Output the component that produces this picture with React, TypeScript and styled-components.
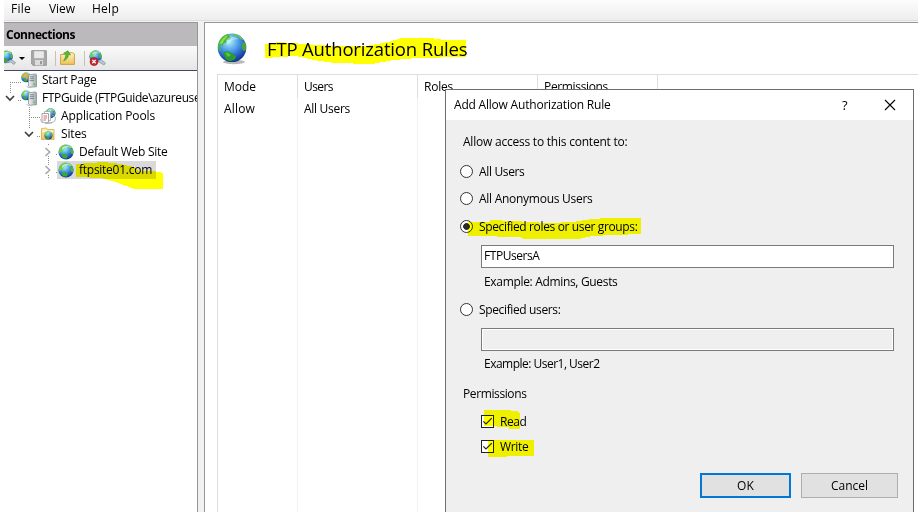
import React, { useLayoutEffect, useRef, useState } from "react";
import styled, { createGlobalStyle, css } from "styled-components";

const GlobalStyle = createGlobalStyle`
  *, *::before, *::after { box-sizing: border-box; }
  html, body { margin: 0; padding: 0; overflow: hidden; background: #fff; }
  body { font-family: "Open Sans", "Noto Sans", sans-serif; font-size: 12px; line-height: 18px; color: #000; }
  svg { display: block; flex: none; }
`;

/* ---------- text ---------- */

const TextSpan = styled.span<{ $bold?: boolean; $size?: number }>`
  position: relative;
  display: inline-block;
  flex: none;
  justify-self: start;
  white-space: pre;
  font-weight: ${(p) => (p.$bold ? 700 : 400)};
  font-size: ${(p) => p.$size ?? 12}px;
`;

interface TextProps {
  children: string;
  width: number;
  bold?: boolean;
  size?: number;
}

/* Tracks the text so that it spans the given width. */
function Text({ children, width, bold, size }: TextProps) {
  const ref = useRef<HTMLSpanElement>(null);
  const [spacing, setSpacing] = useState(0);
  useLayoutEffect(() => {
    if (!ref.current) return;
    const natural = ref.current.getBoundingClientRect().width - spacing * children.length;
    setSpacing((width - natural) / children.length);
  }, [children, width]);
  return (
    <TextSpan ref={ref} $bold={bold} $size={size} style={{ letterSpacing: `${spacing}px` }}>
      {children}
    </TextSpan>
  );
}

/* ---------- marker strokes ---------- */

const MarkerSvg = styled.svg<{ $x: number; $y: number }>`
  position: absolute;
  left: ${(p) => p.$x}px;
  top: ${(p) => p.$y}px;
  mix-blend-mode: multiply;
  pointer-events: none;
  z-index: 2;
`;

function Marker({ x, y, w, h, points }: { x: number; y: number; w: number; h: number; points: string }) {
  return (
    <MarkerSvg $x={x} $y={y} width={w} height={h} shapeRendering="crispEdges">
      <polygon points={points} fill="#ffff00" />
    </MarkerSvg>
  );
}

/* ---------- icons ---------- */

function GlobeShape() {
  return (
    <>
      <circle cx="8" cy="8" r="7.6" fill="url(#sea)" />
      <path d="M.9 6.500C1.800 3 4.500.8 7.500.5L9 2 7 3.200 7.300 4.800 5.200 6 4.600 8.200 2.800 8 1.500 9.800Z" fill="#6fd048" />
      <path d="M8.800 1.400 11 1.100 14 3.600 13 4.600 10.500 3.500Z" fill="#8be063" />
      <path d="M12.300 5.500 14.600 4.700 15.500 8 14.500 10.400 12.600 9Z" fill="#4fb83e" />
      <path d="M3.500 10.200 6.800 9.700 10 12 8.600 14.600 5 14.300Z" fill="#36ad30" />
      <path d="M4 3.800C5.500 1.800 9 1.500 11.200 3 9 3 6 4 4.500 6.500Z" fill="#e4fbff" opacity=".6" />
    </>
  );
}

const HiddenSvg = styled.svg`
  position: absolute;
`;

function IconDefs() {
  return (
    <HiddenSvg width="0" height="0" aria-hidden>
      <defs>
        <radialGradient id="sea" cx=".4" cy=".28" r=".75">
          <stop offset="0" stopColor="#b4f0fb" />
          <stop offset=".45" stopColor="#4a9ce8" />
          <stop offset=".8" stopColor="#1f52b4" />
          <stop offset="1" stopColor="#143582" />
        </radialGradient>
        <linearGradient id="folder" x1="0" y1="0" x2="0" y2="1">
          <stop offset="0" stopColor="#fff3b8" />
          <stop offset="1" stopColor="#efc35b" />
        </linearGradient>
        <linearGradient id="tower" x1="0" y1="0" x2="1" y2="0">
          <stop offset="0" stopColor="#f3f5f6" />
          <stop offset="1" stopColor="#9da7ad" />
        </linearGradient>
      </defs>
    </HiddenSvg>
  );
}

const GlobeIcon = ({ size = 16 }: { size?: number }) => (
  <svg width={size} height={size} viewBox="0 0 16 16">
    <GlobeShape />
  </svg>
);

const LargeGlobe = () => (
  <svg width="32" height="32" viewBox="0 0 32 32">
    <ellipse cx="17" cy="29" rx="11" ry="2.200" fill="#8a8a8a" opacity=".6" />
    <circle cx="15" cy="14.800" r="14.300" fill="url(#sea)" />
    <path d="M.9 13C1.500 7 5.500 2.500 10.500 1L13 1.800 12 3.500 14 4.300 12.500 6.800 10.300 7 9 9.800 6.500 10.500 6 13 3.500 11.600 2.500 14.500 4 17.500 2.200 18Z" fill="#4cb83a" />
    <path d="M2.500 11C4 6.500 7 3.500 10.500 2.200L10 4 7 7.500 5.500 10.500Z" fill="#a5e85c" opacity=".75" />
    <path d="M14.500 1.200 19.500 1.300 24.500 4.200 26.500 7 23.500 6.200 21.500 3.800 18 3.500Z" fill="#66c84d" />
    <path d="M25.500 9.500 28 9.200 29.300 13 28.700 17.500 26.500 18 24.300 14.500Z" fill="#46a53c" />
    <path d="M6 19 11 18.200 15.200 20.500 19.300 23.500 17.500 26.800 12.500 28.300 8.500 26 7.200 22.300Z" fill="#2b9c2c" />
    <path d="M8 20 11 19.500 14 22 11 24Z" fill="#7bd854" opacity=".6" />
    <path d="M9 7C12 3.500 18 3 22 6.500 18 5.800 13 8 10.500 12.500Z" fill="#e4fbff" opacity=".4" />
  </svg>
);

const ServerIcon = ({ home }: { home?: boolean }) => (
  <svg width="16" height="16" viewBox="0 0 16 16">
    <g transform="translate(0 .2) scale(.65)">
      <GlobeShape />
    </g>
    {home && <path d="M.3 4.700 4.800.5 9.200 4.400 8 5.300 4.800 2.500 1.700 5.500ZM4 3.500 7.500 5.500 5.500 8Z" fill="#f3a31d" />}
    <path d="M9 2.700 14.500 1.900 15.600 3V14.700L9 15.300 7.500 14V3.600Z" fill="url(#tower)" stroke="#7c868c" strokeWidth=".7" />
    <path d="M8.700 4.800H13M8.700 6.700H13M8.700 8.600H13" stroke="#66747d" strokeWidth=".8" />
    <rect x="12.300" y="11.300" width="1.800" height="1.800" fill="#51d434" />
    <path d="M5.500 14.500 8 15.500H11" fill="none" stroke="#b6bec3" />
  </svg>
);

const PoolsIcon = () => (
  <svg width="16" height="16" viewBox="0 0 16 16">
    <g transform="translate(5.200 0) scale(.66)">
      <GlobeShape />
    </g>
    <path d="M4.500 3.500H10.500V12.500H4.500Z" fill="#fff" stroke="#9b9b9b" strokeWidth=".7" />
    <path d="M2 5.500H8.500V14.500H2Z" fill="#fff" stroke="#8b8b95" strokeWidth=".8" />
    <path d="M3.500 8H7M3.500 10H7M3.500 12H6" stroke="#e0524b" strokeWidth=".9" />
    <path d="M.5 11C.5 16.500 15.500 16.500 15.500 10.500M12.500 7.500C15 8 15.700 9.500 15.500 11" fill="none" stroke="#b9c3cc" strokeWidth="1.200" />
    <path d="M5 15.400 12 14.800" stroke="#9ba8b2" strokeWidth=".8" />
  </svg>
);

const SitesIcon = () => (
  <svg width="16" height="16" viewBox="0 0 16 16">
    <path d="M1.500 2.500 6.500 2 7.500 3.500H14V13.500H1.500Z" fill="url(#folder)" stroke="#d5a942" strokeWidth=".8" />
    <path d="M2 5.200H13.500" stroke="#fffbe2" />
    <g transform="translate(4 5) scale(.55)">
      <GlobeShape />
    </g>
  </svg>
);

const ConnectIcon = () => (
  <svg width="13" height="16" viewBox="0 0 13 16">
    <g transform="translate(-4 .2) scale(.82)">
      <GlobeShape />
    </g>
    <path d="M1 13 7 9.500 11.500 12.500 10 14.500 6.500 12Z" fill="#b8c7cf" stroke="#758791" strokeWidth=".6" />
  </svg>
);

const SaveIcon = () => (
  <svg width="16" height="16" viewBox="0 0 16 16">
    <path d="M.7.7H15.300V15.300H2L.7 14Z" fill="#a9a9a9" stroke="#939393" />
    <rect x="3.200" y="1.200" width="9.600" height="7" fill="#e9e9e9" />
    <rect x="4" y="10" width="8" height="5.300" fill="#dcdcdc" />
    <rect x="9" y="11" width="2" height="3.300" fill="#999" />
  </svg>
);

const UpFolderIcon = () => (
  <svg width="15" height="16" viewBox="0 0 15 16">
    <path d="M.6 4.500H5L6.500 2.800H12.500L14.400 4V14.400H.6Z" fill="url(#folder)" stroke="#c89a3b" strokeWidth=".9" />
    <path d="M3.500 11C7 9.500 8.300 7.500 8.500 4.500L10.500 5 8 .8 3.500 3.300 5.800 3.900C5.800 6.500 5 8.800 3.500 11Z" fill="#55bb2f" stroke="#318b1d" strokeWidth=".5" />
  </svg>
);

const DisconnectIcon = () => (
  <svg width="18" height="17" viewBox="0 0 18 17">
    <g transform="scale(.82)">
      <GlobeShape />
    </g>
    <path d="M8 11 12 9.500 16.500 13 15 15 11.500 13Z" fill="#b8c7cf" stroke="#758791" strokeWidth=".6" />
    <circle cx="5" cy="11.600" r="4" fill="#c9252b" stroke="#97161b" strokeWidth=".6" />
    <path d="M3.300 9.900 6.700 13.300M6.700 9.900 3.300 13.300" stroke="#fff" strokeWidth="1.300" />
  </svg>
);

const Chevron = ({ open }: { open?: boolean }) =>
  open ? (
    <svg width="10" height="8" viewBox="0 0 10 8">
      <path d="M1 2 5 6 9 2" fill="none" stroke="#404040" strokeWidth="1.700" />
    </svg>
  ) : (
    <svg width="8" height="10" viewBox="0 0 8 10">
      <path d="M1.500 1 5.700 5 1.500 9" fill="none" stroke="#a6a6a6" strokeWidth="1.500" />
    </svg>
  );

/* ---------- window frame ---------- */

const Window = styled.div`
  position: relative;
  width: 918px;
  height: 512px;
  padding-left: 4px;
  display: flex;
  flex-direction: column;
  overflow: hidden;
  background: #fff;
`;

const MenuBar = styled.nav`
  flex: none;
  height: 22px;
  padding: 0 0 4px 7px;
  display: grid;
  grid-template-columns: 38px 43px 1fr;
  align-items: center;
  background: linear-gradient(#fcfcfc, #ececec);
  box-shadow: inset 0 -1px #f4f4f4, inset 0 -2px #dedede;
`;

const Main = styled.div`
  flex: 1;
  min-height: 0;
  display: flex;
  gap: 6px;
  background: #f1f1f1;
`;

const Sidebar = styled.aside`
  width: 194px;
  display: flex;
  flex-direction: column;
  overflow: hidden;
  border-top: 1px solid #969696;
  border-right: 1px solid #969696;
  background: #fff;
`;

const PanelTitle = styled.header`
  flex: none;
  height: 23px;
  padding: 3px 0 0 2px;
  background: #bbb9bb;
`;

const Toolbar = styled.div`
  flex: none;
  height: 25px;
  display: flex;
  align-items: center;
  background: linear-gradient(#fafafa, #e6e6e6);
  border-bottom: 1px solid #44446c;
`;

const DropArrow = styled.i`
  margin: 1px 6px 0 2px;
  border: 3px solid transparent;
  border-top: 3px solid #000;
  border-bottom: 0;
`;

const Divider = styled.i<{ $gap: number }>`
  width: 1px;
  height: 15px;
  margin: 0 4px 0 ${(p) => p.$gap}px;
  background: #c8c1b2;
`;

const Tree = styled.div`
  position: relative;
`;

const TreeRow = styled.div<{ $indent: number; $gap?: number }>`
  position: relative;
  height: 18px;
  display: flex;
  align-items: center;
  padding-left: ${(p) => p.$indent}px;
  gap: ${(p) => p.$gap ?? 6}px;
`;

const Node = styled.span<{ $selected?: boolean }>`
  position: relative;
  height: 18px;
  display: flex;
  align-items: center;
  gap: 5px;
  padding: 0 4px 0 1px;
  background: ${(p) => (p.$selected ? "#d9d9d9" : "transparent")};
`;

const TreeLines = styled.svg`
  position: absolute;
  left: 0;
  top: 0;
`;

/* ---------- content ---------- */

const Content = styled.main`
  position: relative;
  flex: 1;
  padding-left: 12px;
  display: flex;
  flex-direction: column;
  border-left: 1px solid #969696;
  border-top: 1px solid #969696;
  background: #fff;
`;

const Heading = styled.h1`
  position: relative;
  margin: 0;
  height: 51px;
  flex: none;
  display: flex;
  align-items: center;
  gap: 18px;
  font-weight: 400;
  line-height: 26px;
`;

const Grid = styled.div`
  flex: 1;
  display: grid;
  grid-template-columns: 80px 120px 120px 120px 1fr;
  border-top: 1px solid #dedede;
  border-left: 1px solid #dedede;
`;

const Column = styled.div`
  padding: 3px 0 0 6px;
  display: flex;
  flex-direction: column;
  align-items: flex-start;
  gap: 4px;
  border-right: 1px solid;
  border-image: linear-gradient(#dedede 24px, #eef3fb 24px) 1;
  &:last-child { border: 0; }
`;

/* ---------- dialog ---------- */

const Dialog = styled.section`
  position: absolute;
  left: 445px;
  top: 89px;
  width: 469px;
  height: 440px;
  border: 1px solid #6d6d6d;
  background: #efefef;
`;

const DialogTitle = styled.header`
  height: 30px;
  padding: 0 17px 0 8px;
  display: flex;
  align-items: center;
  background: #fff;
`;

const TitleActions = styled.div`
  margin-left: auto;
  display: flex;
  align-items: center;
  gap: 35px;
`;

const Form = styled.div`
  padding: 13px 19px 0 14px;
  display: flex;
  flex-direction: column;
`;

const Line = styled.div<{ $h?: number; $indent?: number }>`
  height: ${(p) => p.$h ?? 18}px;
  padding-left: ${(p) => p.$indent ?? 0}px;
  display: flex;
  align-items: center;
`;

const Option = styled.div<{ $above: number; $indent?: number }>`
  position: relative;
  height: 13px;
  margin-top: ${(p) => p.$above}px;
  padding-left: ${(p) => p.$indent ?? 0}px;
  display: flex;
  align-items: center;
  gap: 6px;
  & > ${TextSpan} { height: 18px; margin-top: 1px; }
`;

const Radio = styled.span<{ $on?: boolean }>`
  width: 13px;
  height: 13px;
  flex: none;
  border: 1px solid #333;
  border-radius: 50%;
  background: #fff;
  ${(p) =>
    p.$on &&
    css`
      background: radial-gradient(circle, #2c2c2c 3px, #fff 3.7px);
    `}
`;

const Field = styled.div<{ $disabled?: boolean; $above?: number }>`
  height: 23px;
  margin: ${(p) => p.$above ?? 0}px 0 0 21px;
  padding: 1px 2px;
  border: 1px solid #7a7a7a;
  background: ${(p) => (p.$disabled ? "#efefef" : "#fff")};
  box-shadow: inset 0 0 0 1px #fff;
`;

const Checkbox = styled.span`
  width: 13px;
  height: 13px;
  flex: none;
  border: 1px solid #222;
  background: #fff;
`;

const Check = () => (
  <Checkbox>
    <svg width="11" height="11" viewBox="0 0 11 11">
      <path d="M1.300 5.300 4 8 9.800 2.200" fill="none" stroke="#222" strokeWidth="1.200" />
    </svg>
  </Checkbox>
);

const Buttons = styled.div`
  margin: 20px -4px 0 0;
  display: flex;
  justify-content: flex-end;
  gap: 10px;
`;

const Button = styled.div<{ $primary?: boolean }>`
  width: ${(p) => (p.$primary ? 91 : 97)}px;
  height: 25px;
  display: flex;
  align-items: center;
  justify-content: center;
  border: ${(p) => (p.$primary ? "2px solid #0078d7" : "1px solid #adadad")};
  background: #e1e1e1;
`;

export default function App() {
  return (
    <>
      <GlobalStyle />
      <IconDefs />
      <Window>
        <MenuBar>
          <Text width={20}>File</Text>
          <Text width={26}>View</Text>
          <Text width={27}>Help</Text>
        </MenuBar>
        <Main>
          <Sidebar>
            <PanelTitle>
              <Text width={69} bold>Connections</Text>
            </PanelTitle>
            <Toolbar>
              <ConnectIcon />
              <DropArrow />
              <SaveIcon />
              <Divider $gap={8} />
              <UpFolderIcon />
              <Divider $gap={9} />
              <DisconnectIcon />
            </Toolbar>
            <Tree>
              <TreeLines width="190" height="108" fill="none" stroke="#8c8c8c" strokeDasharray="1 1" shapeRendering="crispEdges">
                <path d="M6.500 11V22M6 11.500H17M14 29.500H18M25.500 36V58M27 46.500H36M33 65.500H36M44.500 73V75M44.500 85V94M44.500 104V108M52 83.500H54M52 101.500H54" />
              </TreeLines>
              <TreeRow $indent={16}>
                <Node>
                  <ServerIcon home />
                  <Text width={54.500}>Start Page</Text>
                </Node>
              </TreeRow>
              <TreeRow $indent={1} $gap={5}>
                <Chevron open />
                <Node>
                  <ServerIcon />
                  <Text width={166}>FTPGuide (FTPGuide\azureuser)</Text>
                </Node>
              </TreeRow>
              <TreeRow $indent={35}>
                <Node>
                  <PoolsIcon />
                  <Text width={94}>Application Pools</Text>
                </Node>
              </TreeRow>
              <TreeRow $indent={20} $gap={5}>
                <Chevron open />
                <Node>
                  <SitesIcon />
                  <Text width={25.500}>Sites</Text>
                </Node>
              </TreeRow>
              <TreeRow $indent={40} $gap={5}>
                <Chevron />
                <Node>
                  <GlobeIcon />
                  <Text width={88.500}>Default Web Site</Text>
                </Node>
              </TreeRow>
              <TreeRow $indent={40} $gap={5}>
                <Chevron />
                <Node $selected>
                  <GlobeIcon />
                  <Text width={73}>ftpsite01.com</Text>
                </Node>
                <Marker x={72} y={1} w={88} h={28} points="0,2 28,0 45,2 58,5 63,9 77,9 87,11 87,27 58,27 40,20 25,16 0,15" />
              </TreeRow>
            </Tree>
          </Sidebar>
          <Content>
            <Heading>
              <LargeGlobe />
              <Text width={200.500} size={18.500}>FTP Authorization Rules</Text>
              <Marker x={48} y={15} w={202} h={26} points="0,6 14,4 39,6 67,8 101,8 123,4 137,0 165,0 180,2 201,2 201,19 151,20 129,22 107,26 69,25 49,22 31,18 0,20" />
            </Heading>
            <Grid>
              <Column>
                <Text width={32}>Mode</Text>
                <Text width={31}>Allow</Text>
              </Column>
              <Column>
                <Text width={29}>Users</Text>
                <Text width={46}>All Users</Text>
              </Column>
              <Column>
                <Text width={29}>Roles</Text>
              </Column>
              <Column>
                <Text width={64}>Permissions</Text>
              </Column>
              <Column />
            </Grid>
          </Content>
        </Main>
        <Dialog>
          <DialogTitle>
            <Text width={156.500}>Add Allow Authorization Rule</Text>
            <TitleActions>
              <Text width={7} size={13}>?</Text>
              <svg width="12" height="12" viewBox="0 0 12 12">
                <path d="M1 1 11 11M11 1 1 11" fill="none" stroke="#000" strokeWidth="1.100" />
              </svg>
            </TitleActions>
          </DialogTitle>
          <Form>
            <Line $indent={3}>
              <Text width={164.500}>Allow access to this content to:</Text>
            </Line>
            <Option $above={14}>
              <Radio />
              <Text width={45.500}>All Users</Text>
            </Option>
            <Option $above={14}>
              <Radio />
              <Text width={113.500}>All Anonymous Users</Text>
            </Option>
            <Option $above={15}>
              <Radio $on />
              <Text width={158.500}>Specified roles or user groups:</Text>
              <Marker x={8} y={-2} w={173} h={22} points="0,4 22,4 22,2 45,3 80,5 105,4 124,1 140,0 173,0 173,16 146,17 124,18 111,21 56,21 52,19 32,19 25,18 0,18" />
            </Option>
            <Field $above={12}>
              <Text width={55.500}>FTPUsersA</Text>
            </Field>
            <Line $h={28} $indent={24}>
              <Text width={133.500}>Example: Admins, Guests</Text>
            </Line>
            <Option $above={7}>
              <Radio />
              <Text width={81.500}>Specified users:</Text>
            </Option>
            <Field $disabled $above={12} />
            <Line $h={26} $indent={24}>
              <Text width={115.500}>Example: User1, User2</Text>
            </Line>
            <Line $h={34} $indent={3}>
              <Text width={63.500}>Permissions</Text>
            </Line>
            <Option $above={4} $indent={21}>
              <Check />
              <Text width={26.500}>Read</Text>
              <Marker x={24} y={-5} w={37} h={20} points="0,0 26,0 28,1 33,1 36,3 36,19 25,19 25,17 0,16" />
            </Option>
            <Option $above={12} $indent={21}>
              <Check />
              <Text width={28.500}>Write</Text>
              <Marker x={28} y={0} w={46} h={17} points="0,0 46,0 46,16 19,16 19,17 0,17" />
            </Option>
            <Buttons>
              <Button $primary>
                <Text width={17}>OK</Text>
              </Button>
              <Button>
                <Text width={37}>Cancel</Text>
              </Button>
            </Buttons>
          </Form>
        </Dialog>
      </Window>
    </>
  );
}
